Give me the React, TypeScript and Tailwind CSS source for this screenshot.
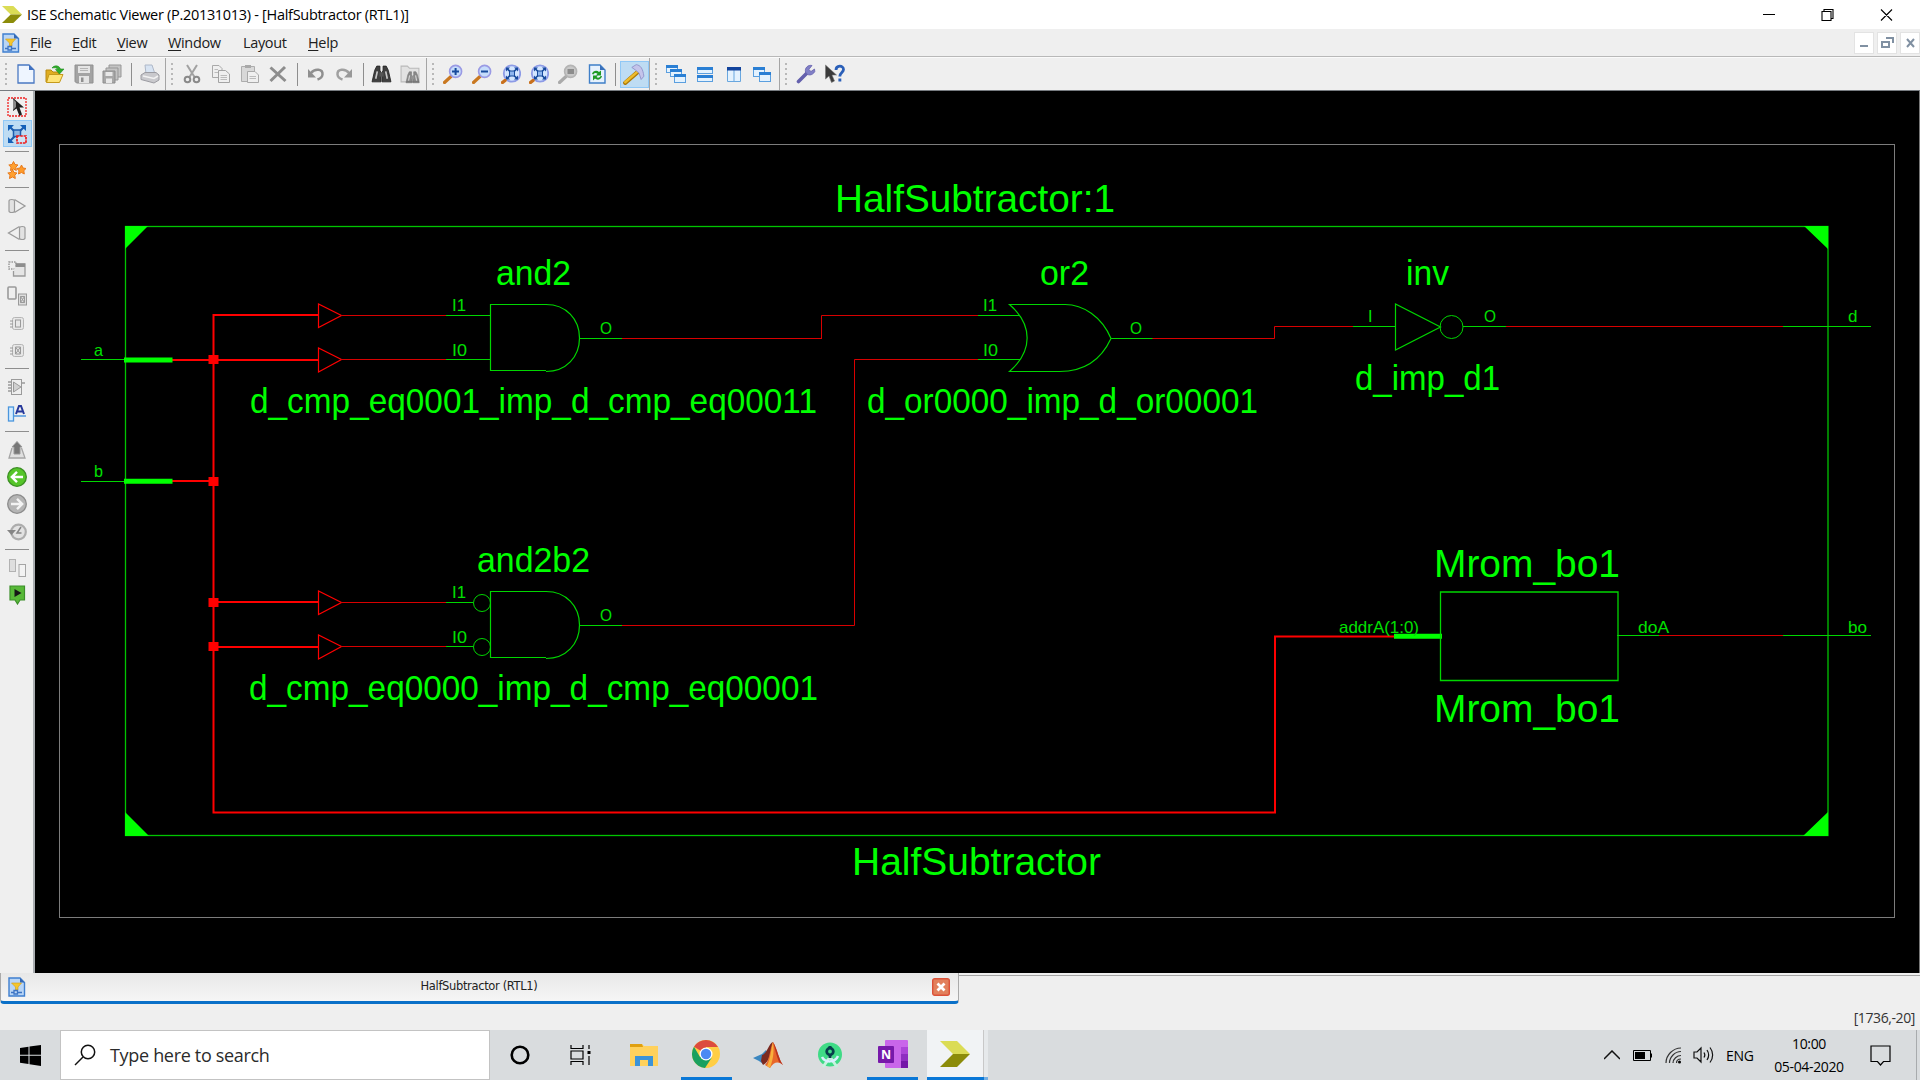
import React, { ReactNode } from "react";

const G = "#00ff00";
const LG = "#00d600";
const R = "#ff0000";
const DR = "#d80000";

function Ico({ children, s = 20 }: { children: ReactNode; s?: number }) {
  return (
    <svg width={s} height={s} viewBox="0 0 20 20" fill="none" className="shrink-0">
      {children}
    </svg>
  );
}

function Cell({ children, active }: { children: ReactNode; active?: boolean }) {
  return (
    <div className="flex w-[28.7px] shrink-0 items-center justify-center">
      {active ? (
        <div className="flex h-[27px] w-[29px] shrink-0 items-center justify-center border border-[#90c8f6] bg-[#bedcf3]">{children}</div>
      ) : (
        children
      )}
    </div>
  );
}

function Sep() {
  return (
    <div className="flex w-[8.6px] shrink-0 items-center justify-center">
      <div className="h-[23px] w-px bg-[#8e8e8e]" />
    </div>
  );
}

function Grip() {
  return (
    <div className="flex w-[12px] shrink-0 flex-col items-center justify-center gap-[3px]">
      {[0, 1, 2, 3, 4].map((i) => (
        <div key={i} className="h-[2px] w-[2px] bg-[#b8b8b8]" />
      ))}
    </div>
  );
}

function Group({ children, className }: { children: ReactNode; className: string }) {
  return <div className={"flex h-full shrink-0 items-stretch " + className}><Grip />{children}</div>;
}

function SCell({ children, active }: { children: ReactNode; active?: boolean }) {
  return (
    <div className="flex h-[27.3px] w-[34px] shrink-0 items-center justify-center">
      {active ? (
        <div className="flex h-[27px] w-[29px] shrink-0 items-center justify-center border border-[#90c8f6] bg-[#bedcf3]">{children}</div>
      ) : (
        children
      )}
    </div>
  );
}

function SSep() {
  return (
    <div className="flex h-[8.6px] w-[34px] shrink-0 items-center justify-center">
      <div className="h-px w-[24px] bg-[#8e8e8e]" />
    </div>
  );
}

function DocIcon() {
  return (
    <svg width="18" height="20" viewBox="0 0 18 20" fill="none">
      <path d="M1 1H12L16.5 5.5V19H1Z" fill="#b9d5f5" stroke="#3f7fcf" strokeWidth="1.4" />
      <path d="M12 1V5.5H16.5Z" fill="#3568b4" />
      <path d="M3.5 6H13.5L10 10V13H7.5V10Z" fill="#f5c62c" stroke="#d49a10" strokeWidth=".6" />
      <path d="M3 15.500H6M6 13.500H9.500V17H6ZM10 15.500H14" stroke="#3d74c4" strokeWidth="1.3" />
    </svg>
  );
}

function Magnifier({ gray, children }: { gray?: boolean; children?: ReactNode }) {
  return (
    <Ico>
      <path d="M1.500 18.500L8 12.500" stroke={gray ? "#aaaaaa" : "#c97820"} strokeWidth="3.2" strokeLinecap="round" />
      <circle cx="12.600" cy="7.400" r="6" fill={gray ? "#c8c8c8" : "#c5dcfb"} stroke={gray ? "#b4b4b4" : "#9a9ae4"} strokeWidth="1.600" />
      {children}
    </Ico>
  );
}

function ZoomFit() {
  return (
    <Ico>
      <circle cx="11" cy="9.500" r="8.200" fill="#d4e6ff" stroke="#8d9be6" strokeWidth="1.800" />
      <path d="M6 4.500L16 14.500M16 4.500L6 14.500" stroke="#174a9c" strokeWidth="1.700" />
      <path d="M5 3.500H9L5 7.500ZM17 3.500H13L17 7.500ZM5 15.500H9L5 11.500ZM17 15.500H13L17 11.500Z" fill="#174a9c" />
      <rect x="8.500" y="7" width="5" height="5" fill="#8fb6ee" stroke="#174a9c" />
      <path d="M1.500 18.500L4 16.500" stroke="#c8701c" strokeWidth="3.400" strokeLinecap="round" />
    </Ico>
  );
}

function Win({ x, y, w, h }: { x: number; y: number; w: number; h: number }) {
  return (
    <g>
      <rect x={x} y={y} width={w} height={h} fill="#e4f2fe" stroke="#5b9fdf" />
      <rect x={x - 0.5} y={y - 0.5} width={w + 1} height="3" fill="#2a7fd4" />
    </g>
  );
}

function Binoculars() {
  return (
    <g>
      <path d="M1 17L3.500 6L5.500 2H8.500V6L9.500 8V17H2Z M19 17L16.500 6L14.500 2H11.500V6L10.500 8V17H18Z" fill="#3f3f3f" stroke="#222" strokeWidth=".8" />
      <path d="M4.500 14L6 7M15.500 14L14 7" stroke="#c8c8c8" strokeWidth="1.600" />
      <path d="M8 8H12V12H8Z" fill="#555" />
    </g>
  );
}

function ToolBar() {
  return (
    <div className="flex h-[33px] shrink-0 items-stretch border-t border-[#fafafa] bg-[#efefef]">
      <Group className="w-[166px] border-r border-[#a5a5a5]">
        <Cell>
          <Ico>
            <path d="M2 1H13L18 6V19H2Z" fill="#eef5ff" stroke="#4a78c2" strokeWidth="1.300" />
            <path d="M13 1V6H18Z" fill="#3f70c0" />
          </Ico>
        </Cell>
        <Cell>
          <Ico>
            <path d="M1 6H6L8 8H14V18H1Z" fill="#e0ad20" stroke="#b98a10" />
            <path d="M4 10.500H18L14.500 18.500H1.500Z" fill="#ffe477" stroke="#c59a1c" />
            <path d="M7 4C9 1 14 1 15.500 5H19L14.500 10L10.500 5.500H13C12 3.500 9.500 3.500 7 4Z" fill="#2fae2a" stroke="#1b8a1b" strokeWidth=".6" />
          </Ico>
        </Cell>
        <Cell>
          <Ico>
            <path d="M1 1H19V19H2.500L1 17.500Z" fill="#a3a3a3" stroke="#909090" />
            <path d="M4 2H16V9H4ZM5 12H15V19H5Z" fill="#e4e4e4" />
            <path d="M6 4.500H14M6 6.500H14" stroke="#b5b5b5" />
            <path d="M7 13.500H9.500V18H7Z" fill="#909090" />
          </Ico>
        </Cell>
        <Cell>
          <Ico>
            <path d="M7 1H19V13H7Z" fill="#c4c4c4" stroke="#979797" />
            <path d="M4 4H16V16H4Z" fill="#c4c4c4" stroke="#979797" />
            <path d="M1 7H13V19H1Z" fill="#a8a8a8" stroke="#8d8d8d" />
            <path d="M3.500 8H10.500V12H3.500ZM4 14.500H10V19H4Z" fill="#e8e8e8" />
          </Ico>
        </Cell>
        <Sep />
        <Cell>
          <Ico>
            <path d="M5 1L12 1L15 10L6 10Z" fill="#d7e3f2" stroke="#aeb8c8" />
            <path d="M1 11L5 8.500H16L19 11V16L14 19L1 15.500Z" fill="#c9c9cd" stroke="#9c9ca2" />
            <path d="M3 12L14 14.500L18 12" stroke="#f2f2f2" strokeWidth="1.500" />
          </Ico>
        </Cell>
      </Group>
      <Group className="w-[261px] border-r border-[#a5a5a5]">
        <Cell>
          <Ico>
            <path d="M5 1L12.500 13M15 1L7.500 13" stroke="#a2a2a2" strokeWidth="2" />
            <circle cx="5.500" cy="15.500" r="2.800" stroke="#8a8a8a" strokeWidth="2" />
            <circle cx="14.500" cy="15.500" r="2.800" stroke="#8a8a8a" strokeWidth="2" />
          </Ico>
        </Cell>
        <Cell>
          <Ico>
            <path d="M1.500 1.500H8L11 4.500V13.500H1.500Z" fill="#efefef" stroke="#a9a9a9" />
            <path d="M7.500 6.500H14.500L18.500 10V18.500H7.500Z" fill="#efefef" stroke="#a3a3a3" />
            <path d="M9.500 11.500H16M9.500 13.500H16M9.500 15.500H16M3.500 5.500H7M3.500 8.500H7" stroke="#bbb" />
          </Ico>
        </Cell>
        <Cell>
          <Ico>
            <path d="M1.500 2.500H14.500V17.500H1.500Z" fill="#d8d8d8" stroke="#adadad" />
            <path d="M5 1H11V4H5Z" fill="#a9a9a9" />
            <path d="M7.500 7.500H15L18.500 11V18.500H7.500Z" fill="#efefef" stroke="#a9a9a9" />
            <path d="M9.500 12.500H16M9.500 14.500H16" stroke="#bbb" />
          </Ico>
        </Cell>
        <Cell>
          <Ico><path d="M2.500 3.500L17.500 17M17 3L2.500 17" stroke="#8d8d8d" strokeWidth="3" /></Ico>
        </Cell>
        <Sep />
        <Cell>
          <Ico>
            <path d="M5 9C9 4 17 5 16.500 10.500C16.300 13 14.500 14.500 11.500 15.500" stroke="#8f8f8f" strokeWidth="2.500" />
            <path d="M2 5V13.500H10Z" fill="#8f8f8f" />
          </Ico>
        </Cell>
        <Cell>
          <Ico>
            <path d="M15 9C11 4 3 5 3.500 10.500C3.700 13 5.500 14.500 8.500 15.500" stroke="#a0a0a0" strokeWidth="2.500" />
            <path d="M18 5V13.500H10Z" fill="#999" />
          </Ico>
        </Cell>
        <Sep />
        <Cell><Ico s={21}><Binoculars /></Ico></Cell>
        <Cell>
          <Ico s={21}>
            <path d="M1 2H7L9 4H18V17H1Z" fill="#e2e2e2" stroke="#b9b9b9" />
            <g opacity=".55" transform="translate(5 6) scale(.7)"><Binoculars /></g>
          </Ico>
        </Cell>
      </Group>
      <Group className="w-[223px] border-r border-[#a5a5a5]">
        <Cell><Magnifier><path d="M12.600 4V11M9 7.500H16" stroke="#174a9c" strokeWidth="2" /></Magnifier></Cell>
        <Cell><Magnifier><path d="M9 7.500H16" stroke="#174a9c" strokeWidth="2" /></Magnifier></Cell>
        <Cell><ZoomFit /></Cell>
        <Cell><ZoomFit /></Cell>
        <Cell><Magnifier gray><path d="M9.500 5H16V10H9.500Z" fill="#8c8c8c" /></Magnifier></Cell>
        <Cell>
          <Ico>
            <path d="M2.500 1H13L18 6V19H2.500Z" fill="#e6f1fd" stroke="#3f7fc8" strokeWidth="1.400" />
            <path d="M13 1V6H18Z" fill="#3a70ba" />
            <path d="M5 10C6 6.500 10 6 12 8L14 6.500V11.500H9L10.500 9.800C9 8.500 7 8.800 6.500 10.500Z" fill="#1f9a25" />
            <path d="M15 12C14 16 10 16.500 8 14.500L6 16.500V11.500H11L9.500 13C11 14.500 13 13.500 13.500 12Z" fill="#1f9a25" />
          </Ico>
        </Cell>
        <Sep />
        <Cell active>
          <Ico s={22}>
            <path d="M2 18L13 8.500" stroke="#ad7a08" strokeWidth="3.800" strokeLinecap="round" />
            <path d="M2 17.500L13 8" stroke="#eebc2c" strokeWidth="2.200" strokeLinecap="round" />
            <path d="M8 4L12 1.500C16 2 18 5 19 12L16.500 15L14.500 9L11.500 6.500Z" fill="#c4c4ea" stroke="#8f90c8" strokeWidth=".8" />
          </Ico>
        </Cell>
      </Group>
      <Group className="w-[130px] border-r border-[#a5a5a5]">
        <Cell>
          <Ico><Win x={0.5} y={1.500} w={11} h={7} /><Win x={4.500} y={5.500} w={11} h={7} /><Win x={8.500} y={10.500} w={11} h={8} /></Ico>
        </Cell>
        <Cell>
          <Ico><Win x={2.500} y={3.500} w={15} h={6} /><Win x={2.500} y={11.500} w={15} h={6} /></Ico>
        </Cell>
        <Cell>
          <Ico>
            <path d="M3.500 3.500H16.500V17.500H3.500ZM10 6V17" fill="#e4f2fe" stroke="#69a7df" />
            <path d="M3 3H17V6.500H3Z" fill="#12439c" />
          </Ico>
        </Cell>
        <Cell>
          <Ico><Win x={1.500} y={3.500} w={11} h={9} /><Win x={7.500} y={8.500} w={11} h={9} /></Ico>
        </Cell>
      </Group>
      <Group className="flex-1">
        <Cell>
          <Ico>
            <path d="M2.500 17.500L11 9" stroke="#6460ad" strokeWidth="3.600" strokeLinecap="round" />
            <path d="M16 1.500C12 .5 8.500 4 9.500 8C11 12 16.500 12 18.800 7.500L18.500 5L15 7.500L12.800 5.500Z" fill="#8180c6" stroke="#6460ad" strokeWidth=".8" />
          </Ico>
        </Cell>
        <Cell>
          <Ico>
            <path d="M.5 1V15L4 12L6.500 18.500L9.500 17L7 11H11.500Z" fill="#3a3a3a" stroke="#777" strokeWidth=".6" />
            <path d="M11 6C11 1 18.500 1 18.500 5.500C18.500 8.500 14.800 8.500 14.800 12.500" stroke="#2a5fb8" strokeWidth="2.800" />
            <path d="M13.400 14.500H16.300V17.500H13.400Z" fill="#2a5fb8" />
          </Ico>
        </Cell>
      </Group>
    </div>
  );
}

function SideBar() {
  const gr = "#9a9a9a";
  return (
    <div className="flex w-[35px] shrink-0 flex-col border-r-2 border-[#a9adb0] bg-[#efefef] pt-[2px]">
      <SCell>
        <Ico>
          <rect x="1" y="1" width="18" height="18" stroke="#f02020" strokeWidth="1.300" strokeDasharray="2 1" />
          <path d="M6 1V14L9.500 11.500L12.500 19L15 17.500L12.500 10.500H17Z" fill="#1c1c1c" />
          <path d="M6 2V13L9 10V5Z" fill="#8a8a8a" />
        </Ico>
      </SCell>
      <SCell active>
        <Ico>
          <path d="M3 3L17 17M17 3L3 17" stroke="#1d5cae" strokeWidth="2" />
          <path d="M1 1H7L1 7ZM19 1H13L19 7ZM1 19H7L1 13Z" fill="#1460b8" />
          <rect x="6.500" y="6" width="7" height="6.500" fill="#8cb6e4" stroke="#1d5cae" strokeWidth="1.500" />
          <rect x="10" y="12" width="9" height="7" fill="#cfe2f4" stroke="#f01818" strokeWidth="1.700" strokeDasharray="2.500 .8" />
        </Ico>
      </SCell>
      <SSep />
      <SCell>
        <Ico>
          <path id="star" d="M6.500 1.500L8 4.500L11 5L8.800 7.200L9.300 10.500L6.500 9L3.500 10.500L4 7.200L1.800 5L5 4.500Z" fill="#ffa030" stroke="#e87a1c" />
          <path d="M14.500 5L16 8L19 8.500L16.800 10.700L17.300 14L14.500 12.500L11.500 14L12 10.700L9.800 8.500L13 8Z" fill="#ff9a28" stroke="#e87a1c" />
          <path d="M5.500 9.500L7 12.500L10 13L7.800 15.200L8.300 18.500L5.500 17L2.500 18.500L3 15.200L.8 13L4 12.500Z" fill="#ffa030" stroke="#e87a1c" />
        </Ico>
      </SCell>
      <SSep />
      <SCell>
        <Ico><path d="M7.500 3.500L18 10L7.500 16.500" stroke={gr} strokeWidth="1.300" /><path d="M2 5C2 3 7.500 3 7.500 5V15C7.500 17 2 17 2 15Z" fill="#e2e2e2" stroke={gr} strokeWidth="1.200" /></Ico>
      </SCell>
      <SCell>
        <Ico><path d="M12.500 3.500L1.500 10L12.500 16.500" stroke={gr} strokeWidth="1.300" /><path d="M12.500 5C12.500 3 18 3 18 5V15C18 17 12.500 17 12.500 15Z" fill="#e2e2e2" stroke={gr} strokeWidth="1.200" /></Ico>
      </SCell>
      <SSep />
      <SCell>
        <Ico>
          <rect x="2" y="3" width="7" height="7" stroke={gr} strokeWidth="1.500" strokeDasharray="1.500 1" />
          <path d="M6.500 12V17H18V5H9" fill="#e5e5e5" stroke={gr} strokeWidth="1.300" /><path d="M8.500 4.500H18V8H8.500Z" fill="#8e8e8e" />
        </Ico>
      </SCell>
      <SCell>
        <Ico>
          <rect x="1" y="1" width="8" height="12" rx="1" stroke={gr} strokeWidth="1.600" />
          <rect x="11.500" y="8" width="8" height="11" fill="#ddd" stroke={gr} /><path d="M13.500 10.500H17.500V16.500H13.500ZM13.500 10.500L17.500 16.500M17.500 10.500L13.500 16.500" stroke={gr} />
        </Ico>
      </SCell>
      <SCell>
        <Ico><rect x="5.500" y="3.500" width="11" height="12" rx="2" fill="#e7e7e7" stroke="#b5b5b5" /><rect x="8.500" y="6" width="5" height="7" stroke={gr} /><path d="M3 7H6M3 10H6M3 13H6" stroke={gr} /></Ico>
      </SCell>
      <SCell>
        <Ico><rect x="5.500" y="3.500" width="11" height="12" rx="2" fill="#e7e7e7" stroke="#b5b5b5" /><path d="M8.500 6H13.500V13H8.500ZM8.500 6L13.500 13M13.500 6L8.500 13M3 7H6M3 10H6M3 13H6" stroke={gr} /></Ico>
      </SCell>
      <SSep />
      <SCell>
        <Ico><rect x="4.500" y="2.500" width="10" height="15" fill="#eee" stroke={gr} /><path d="M6.500 5L14 10L6.500 15Z" fill="#d0d0d0" stroke={gr} /><path d="M1 5H4M1 8H4M1 11H4M1 14H4M14 6H18" stroke={gr} strokeWidth="1.300" /></Ico>
      </SCell>
      <SCell>
        <Ico>
          <rect x="1.500" y="3" width="5" height="14" fill="#d5edff" stroke="#4a96dd" strokeWidth="1.300" />
          <path d="M7 12H19" stroke="#5a9ee0" strokeWidth="1.600" />
          <path d="M9 10L12 2H14L17 10M10.500 7.500H15.500" stroke="#26389a" strokeWidth="2" />
        </Ico>
      </SCell>
      <SSep />
      <SCell>
        <Ico><path d="M5 8L2 18H18L14.500 8" stroke="#a5a5a5" strokeWidth="1.300" fill="#e0e0e0" /><path d="M10 1.500L15 7H13V14H7V7H5Z" fill="#777" stroke="#999" /></Ico>
      </SCell>
      <SCell>
        <Ico><circle cx="10" cy="10" r="9.300" fill="#56c52a" stroke="#3c8f24" strokeWidth="1.300" /><path d="M16 10H5M10 4.800L4.800 10L10 15.200" stroke="#fff" strokeWidth="2.400" /></Ico>
      </SCell>
      <SCell>
        <Ico><circle cx="10" cy="10" r="9.300" fill="#b5b5b5" stroke="#8c8c8c" strokeWidth="1.300" /><path d="M4 10H15M10 4.800L15.200 10L10 15.200" stroke="#f3f3f3" strokeWidth="2.400" /></Ico>
      </SCell>
      <SCell>
        <Ico><circle cx="11.500" cy="10" r="7.300" fill="#e2e2e2" stroke="#adadad" strokeWidth="2.200" /><path d="M0 8H9L4.500 13Z" fill="#858585" /><path d="M14 5L10 11H14.500" stroke="#858585" strokeWidth="1.500" /></Ico>
      </SCell>
      <SSep />
      <SCell>
        <Ico><rect x="2.500" y="1.500" width="6" height="12" fill="#dedede" stroke="#b2b2b2" /><rect x="12" y="6.500" width="6.500" height="12" fill="#f3f3f3" stroke="#a5a5a5" /></Ico>
      </SCell>
      <SCell>
        <Ico><path d="M3 1H17.500V15H13L10.500 19L8 15H3Z" fill="#58b838" stroke="#3c8f2a" strokeWidth="1.200" /><path d="M7.500 4V12L14.500 8Z" fill="#161616" /></Ico>
      </SCell>
    </div>
  );
}

interface LabelProps { x: number; y: number; w: number; size?: number; children: string }
function Label({ x, y, w, size = 35, children }: LabelProps) {
  return (
    <text x={x} y={y} fontSize={size} textLength={w} lengthAdjust="spacingAndGlyphs" fill={size > 20 ? G : "#00e000"} fontFamily='"Liberation Sans", Arial, sans-serif'>
      {children}
    </text>
  );
}

function Lines({ d, c, w = 1 }: { d: string; c: string; w?: number }) {
  return <path d={d} stroke={c} strokeWidth={w} fill="none" />;
}

function AndGate({ dy, bubbles }: { dy: number; bubbles?: boolean }) {
  return (
    <g transform={`translate(0 ${dy})`}>
      <Lines c={R} w={2} d="M213.500 315H318M213.500 360H318" />
      <Lines c={R} w={1.200} d="M318.500 304V327.500L341.500 315.500ZM318.500 348V372L341.500 359.500Z" />
      <Lines c={DR} d="M341 315.500H447M341 359.500H447M622 338.500H821" />
      <Lines c={LG} d={bubbles ? "M446 315.500H473M446 359.500H473M579 338.500H622" : "M446 315.500H490M446 359.500H490M579 338.500H622"} />
      <Lines c={LG} w={1.200} d="M546 304.500H490.500V370.500H546M546 304.500C566 304.500 579.500 319 579.500 338C579.500 357 566 371.500 546 371.500" />
      {bubbles && <><circle cx="482" cy="316" r="8.500" stroke={LG} fill="none" /><circle cx="482" cy="360" r="8.500" stroke={LG} fill="none" /></>}
      <Label x={452} y={311} w={14} size={16.500}>I1</Label>
      <Label x={452} y={356} w={15} size={16.500}>I0</Label>
      <Label x={600} y={333.500} w={12} size={16.500}>O</Label>
    </g>
  );
}

function Schematic() {
  return (
    <svg width="1883" height="881" viewBox="35 91 1883 881" className="block shrink-0 bg-black">
      <rect x="59.500" y="144.500" width="1835" height="773" fill="none" stroke="#7c7c7c" />
      <rect x="125.500" y="226.500" width="1702.500" height="609" fill="none" stroke="#00c400" strokeWidth="1.300" />
      <path d="M125 226H148L125 249ZM1828 226H1804L1828 249ZM125 836H149L125 812ZM1828 836H1803L1828 812Z" fill={G} />

      <AndGate dy={0} />
      <g>
        <rect x="600" y="620" width="300" height="12" fill="#000" />
        <AndGate dy={287} bubbles />
      </g>
      <Lines c={DR} d="M821.500 339V315.500H978M821 625.500H854.500V359.500H978M1152 338.500H1274.500V326.500H1353M1506 326.500H1784M1659 635.500H1783" />
      <Lines c={LG} d="M978 315.500H1020M978 359.500H1020M1111 338.500H1152.500M1353 326.500H1396M1463 326.500H1506M1783 326.500H1871M1617 635.500H1659M1783 635.500H1871" />
      <Lines c={R} w={2} d="M172 360H214M172 481H214M213.500 314V812.500H1275V636.500H1397" />
      <path d="M208.500 355H218.500V364H208.500ZM208.500 477H218.500V486H208.500ZM208.500 598H218.500V607H208.500ZM208.500 642H218.500V651H208.500Z" fill={R} />
      <Lines c={LG} d="M81 359.500H125M81 481.500H125" />
      <Lines c={G} w={5} d="M124 360H172.500M124 481.300H172.500M1394 636.300H1442" />

      <Lines c={LG} w={1.200} d="M1064 304.500H1009.500C1033 325 1033 351 1009.500 371.500H1058C1083 372 1101 360 1111 338.500C1102 317 1083 304 1064 304.500" />
      <Lines c={LG} w={1.200} d="M1395.500 304V350L1440.500 327Z" />
      <ellipse cx="1451.500" cy="327" rx="11.500" ry="11.500" fill="none" stroke={LG} />
      <Lines c={LG} w={1.300} d="M1440.500 592H1618V680.500H1440.500Z" />

      <Label x={835} y={211.500} w={280} size={38}>HalfSubtractor:1</Label>
      <Label x={852} y={875} w={249} size={38}>HalfSubtractor</Label>
      <Label x={496} y={285} w={75}>and2</Label>
      <Label x={250} y={412.500} w={567}>d_cmp_eq0001_imp_d_cmp_eq00011</Label>
      <Label x={477} y={572} w={113}>and2b2</Label>
      <Label x={249} y={699.500} w={569}>d_cmp_eq0000_imp_d_cmp_eq00001</Label>
      <Label x={1040} y={285} w={49}>or2</Label>
      <Label x={867} y={412.500} w={391}>d_or0000_imp_d_or00001</Label>
      <Label x={1406} y={285} w={43}>inv</Label>
      <Label x={1355} y={390} w={145}>d_imp_d1</Label>
      <Label x={1434} y={576.500} w={186} size={38}>Mrom_bo1</Label>
      <Label x={1434} y={721.500} w={186} size={38}>Mrom_bo1</Label>
      <Label x={94} y={355.500} w={9} size={16.500}>a</Label>
      <Label x={94} y={477} w={9} size={16.500}>b</Label>
      <Label x={983} y={311} w={14} size={16.500}>I1</Label>
      <Label x={983} y={356} w={15} size={16.500}>I0</Label>
      <Label x={1130} y={333.500} w={12} size={16.500}>O</Label>
      <Label x={1368} y={322} w={4.500} size={16.500}>I</Label>
      <Label x={1484} y={322} w={12} size={16.500}>O</Label>
      <Label x={1848} y={322} w={9.500} size={16.500}>d</Label>
      <Label x={1339} y={632.500} w={80} size={16.500}>addrA(1:0)</Label>
      <Label x={1638} y={632.500} w={31} size={16.500}>doA</Label>
      <Label x={1848} y={632.500} w={19} size={16.500}>bo</Label>
    </svg>
  );
}

function Logo({ w, h }: { w: number; h: number }) {
  return (
    <svg width={w} height={h} viewBox="0 0 30 26" preserveAspectRatio="none">
      <path d="M0 0H17L30 13H13Z" fill="#dbdc55" />
      <path d="M13 13H30L17 26H0Z" fill="#8c8c0a" />
    </svg>
  );
}

function MenuItem({ k, rest, w }: { k: string; rest: string; w: string }) {
  return (
    <div className={"shrink-0 whitespace-pre " + w}>
      <span className="underline underline-offset-2">{k}</span>{rest}
    </div>
  );
}

function TaskIcon({ children, bar, active, w = "w-[62px]" }: { children: ReactNode; bar?: boolean; active?: boolean; w?: string }) {
  return (
    <div className={"flex h-full shrink-0 flex-col items-center " + w}>
      <div className={active ? "flex w-[57px] flex-1 items-center justify-center border-r border-[#c8c8c8] bg-[#f1f3f5]" : "flex w-[51px] flex-1 items-center justify-center"}>{children}</div>
      <div className={bar ? (active ? "h-[3px] w-[57px] bg-[#0a78d7]" : "h-[3px] w-[51px] bg-[#0a78d7]") : "h-0"} />
    </div>
  );
}

function TaskBar() {
  return (
    <div className='flex h-[50px] shrink-0 items-stretch bg-[#d9dcde] font-["Open_Sans","Noto_Sans",sans-serif] text-black'>
      <div className="flex w-[60px] shrink-0 items-center justify-center">
        <svg width="21" height="21" viewBox="0 0 21 21"><path d="M0 3L8.500 1.800V9.800H0ZM9.500 1.600L21 0V9.800H9.500ZM0 10.800H8.500V19L0 17.800ZM9.500 10.800H21V21L9.500 19.300Z" fill="#000" /></svg>
      </div>
      <div className="flex w-[430px] shrink-0 items-center border border-[#c3c3c3] bg-white pl-[13px]">
        <svg width="22" height="22" viewBox="0 0 22 22" fill="none" stroke="#111" strokeWidth="1.500"><circle cx="14" cy="8" r="6.700" /><path d="M9 13L1 21" /></svg>
        <span className="ml-[14px] text-[18px] tracking-[-0.32px] text-[#2b2b2b]">Type here to search</span>
      </div>
      <TaskIcon w="w-[60px]">
        <svg width="20" height="20" viewBox="0 0 20 20"><circle cx="10" cy="10" r="8.300" fill="none" stroke="#000" strokeWidth="2.600" /></svg>
      </TaskIcon>
      <TaskIcon w="w-[60px]">
        <svg width="21" height="20" viewBox="0 0 21 20" fill="none" stroke="#000" strokeWidth="1.200"><path d="M1 0V3.500H13V0M1 20V16.500H13V20M1 6H13V14H1ZM19 0V4M19 11V20" /><path d="M17.500 6H20.500V9H17.500Z" fill="#000" stroke="none" /></svg>
      </TaskIcon>
      <TaskIcon w="w-[67px]">
        <svg width="28" height="24" viewBox="0 0 28 24"><path d="M0 1H12L14 3H28V23H0Z" fill="#ffd15c" /><path d="M0 1H12L13 4H0Z" fill="#e0a010" /><path d="M5 23V13H23V23H18V17H10V23Z" fill="#3c93d8" /></svg>
      </TaskIcon>
      <TaskIcon bar w="w-[58px]">
        <svg width="28" height="28" viewBox="0 0 28 28">
          <circle cx="14" cy="14" r="14" fill="#ffce44" />
          <path d="M14 14L2 6.800A14 14 0 0 1 26 7H14Z" fill="#dc4b3e" />
          <path d="M2 6.800A14 14 0 0 0 13 28L19.500 18L14 14L8 17Z" fill="#1aa05f" />
          <circle cx="14" cy="14" r="6.500" fill="#fff" /><circle cx="14" cy="14" r="5.200" fill="#4a8af4" />
        </svg>
      </TaskIcon>
      <TaskIcon w="w-[66px]">
        <svg width="30" height="27" viewBox="0 0 30 27">
          <path d="M0 16L9 12L13 8L16 14L10 22L6 19Z" fill="#3b87c0" />
          <path d="M9 13C14 12 16 1 20 0C18 10 17 20 10 23L8 19Z" fill="#7b2a21" />
          <path d="M20 0C24 6 26 18 30 23C25 19 21 20 17 26L12 23C17 18 17 5 20 0Z" fill="#e8672a" />
          <path d="M20 0C21 8 21 15 17 26L14 24C18 15 18 7 20 0Z" fill="#f8b03c" />
          <path d="M20 0C24 6 26 18 30 23L26 20C23 13 22 6 20 0Z" fill="#b83220" />
        </svg>
      </TaskIcon>
      <TaskIcon w="w-[57px]">
        <svg width="26" height="26" viewBox="0 0 26 26" fill="none">
          <circle cx="13" cy="12.500" r="12" fill="#3fdb86" />
          <path d="M13 15L6 25M13 15L20 25" stroke="#c8f1e0" strokeWidth="3" />
          <path d="M5 15C8 21 18 21 21 14" stroke="#d9efff" strokeWidth="2.500" />
          <circle cx="13" cy="9.500" r="3.300" stroke="#073f4c" strokeWidth="2.800" /><path d="M13 4V6M13 13V16" stroke="#073f4c" strokeWidth="3" />
        </svg>
      </TaskIcon>
      <TaskIcon bar w="w-[69px]">
        <svg width="30" height="28" viewBox="0 0 30 28">
          <rect x="7" width="23" height="28" rx="1" fill="#c966ea" /><path d="M23 7H30V14H23Z" fill="#ac46d8" /><path d="M23 14H30V21H23Z" fill="#8e2fc0" /><path d="M23 21H30V28H23Z" fill="#7417a8" />
          <rect y="6" width="16" height="17" rx="1" fill="#7719aa" />
          <text x="8" y="19" fontSize="12.500" fontWeight="700" fontFamily='"Open Sans", sans-serif' textAnchor="middle" fill="#fff">N</text>
        </svg>
      </TaskIcon>
      <TaskIcon bar active w="w-[57px]"><Logo w={30} h={26} /></TaskIcon>
      <div className="w-[4px] shrink-0 border-b-[3px] border-[#74aee2] bg-[#e6e9eb]" />
      <div className="flex-1" />
      <div className="flex w-[316px] shrink-0 items-center">
        <svg width="16" height="10" viewBox="0 0 16 10" fill="none" stroke="#111" strokeWidth="1.500"><path d="M0 9L8 1L16 9" /></svg>
        <svg className="ml-[13px]" width="20" height="13" viewBox="0 0 20 13"><path d="M.5 1.500H17.500V11.500H.5Z" fill="none" stroke="#000" /><path d="M2 3H12V10H2ZM17.500 4.500H19V8.500H17.500Z" fill="#000" /></svg>
        <svg className="ml-[12px]" width="17" height="17" viewBox="0 0 17 17" fill="none" stroke="#333" strokeWidth="1.200"><path d="M1 16C1 8 8 1 16 1M4.500 16C4.500 10 10 4.500 16 4.500M8 16C8 12 12 8.500 16 8.500M11.500 16C11.500 14 13 12 16 12" /><circle cx="14.500" cy="15" r="1.500" fill="#000" stroke="none" /></svg>
        <svg className="ml-[11px]" width="21" height="18" viewBox="0 0 21 18" fill="none" stroke="#111" strokeWidth="1.200"><path d="M1 6H4L8 2V16L4 12H1ZM11 6.500C12 8 12 10 11 11.500M14 4C16 7 16 11 14 14M17 1.500C20.500 6 20.500 12 17 16.500" /></svg>
        <span className="ml-[12px] w-[29px] text-[14px] tracking-[-0.3px]">ENG</span>
        <div className="ml-[15px] flex w-[78px] flex-col items-center whitespace-nowrap text-[14px] leading-[23px] tracking-[-0.35px]"><span>10:00</span><span>05-04-2020</span></div>
        <svg className="ml-[22px]" width="21" height="21" viewBox="0 0 21 21" fill="none" stroke="#000" strokeWidth="1.200"><path d="M1 1H20V16.500H13.500L10.500 20L7.500 16.500H1Z" /></svg>
        <div className="ml-[25px] h-[50px] w-px bg-[#a8abad]" />
      </div>
    </div>
  );
}

export default function App() {
  return (
    <div className='flex h-[1080px] w-[1920px] flex-col overflow-hidden bg-[#efefef] font-["Open_Sans","Noto_Sans",sans-serif] text-black'>
      <div className="flex h-[29px] shrink-0 items-center bg-white pl-[2px]">
        <Logo w={20} h={17} />
        <span className="ml-[5px] flex-1 whitespace-nowrap text-[14.5px] tracking-[-0.3px]">ISE Schematic Viewer (P.20131013) - [HalfSubtractor (RTL1)]</span>
        <svg className="mr-[25px]" width="133" height="14" viewBox="0 0 133 14" fill="none" stroke="#000" strokeWidth="1.100">
          <path d="M1 6.500H13M60 3.500H69V12.500H60ZM62 3V1.500H71V10.500H69M119 1.500L130 12.500M130 1.500L119 12.500" />
        </svg>
      </div>
      <div className="flex h-[28px] shrink-0 items-center border-b border-[#b8b8b8] pl-[2px] text-[14.5px] tracking-[-0.35px] text-[#202020]">
        <DocIcon />
        <div className="ml-[10px] flex flex-1">
          <MenuItem k="F" rest="ile" w="w-[42px]" />
          <MenuItem k="E" rest="dit" w="w-[45px]" />
          <MenuItem k="V" rest="iew" w="w-[51px]" />
          <MenuItem k="W" rest="indow" w="w-[75px]" />
          <MenuItem k="" rest="Layout" w="w-[65px]" />
          <MenuItem k="H" rest="elp" w="w-[50px]" />
        </div>
        <div className="flex gap-[3px]">
          {["M6 13H14", "M9 5H16V10M5 9H12V14H5Z", "M7 6L14 14M14 6L7 14"].map((d) => (
            <div key={d} className="flex h-[22px] w-[20px] items-center justify-center border border-[#e3e3e3] bg-white">
              <svg width="18" height="18" viewBox="1 1 18 18" fill="none" stroke="#8090a2" strokeWidth="2"><path d={d} /></svg>
            </div>
          ))}
        </div>
      </div>
      <ToolBar />
      <div className="flex h-[883px] shrink-0 border-t border-[#777b80]">
        <SideBar />
        <div className="flex flex-1 items-start bg-black">
          <Schematic />
          <div className="ml-auto h-full w-[1px] bg-[#777]" />
        </div>
      </div>
      <div className="flex h-[31px] shrink-0 items-start">
        <div className="flex h-[31px] w-[959px] shrink-0 items-center rounded-b border-b-[3px] border-l border-r border-b-[#0a70c8] border-l-[#aaa] border-r-[#aaa] bg-gradient-to-b from-[#e8e8e8] to-[#f6f6f6] pr-[8px] pl-[7px]">
          <DocIcon />
          <span className='flex-1 text-center font-["DejaVu_Sans",sans-serif] text-[11.5px] tracking-[-0.35px] text-[#222]'>HalfSubtractor (RTL1)</span>
          <svg width="18" height="18" viewBox="0 0 18 18"><rect x=".7" y=".7" width="16.600" height="16.600" rx="2" fill="#e2805c" stroke="#dc5138" strokeWidth="1.400" /><path d="M5.500 5.500L12.500 12.500M12.500 5.500L5.500 12.500" stroke="#fff" strokeWidth="2.800" /></svg>
        </div>
        <div className="mt-[2px] h-px flex-1 bg-[#a5a5a5]" />
      </div>
      <div className="flex h-[26px] shrink-0 items-center justify-end pr-[5px] text-[14px] tracking-[-0.4px] text-[#333]">[1736,-20]</div>
      <TaskBar />
    </div>
  );
}
